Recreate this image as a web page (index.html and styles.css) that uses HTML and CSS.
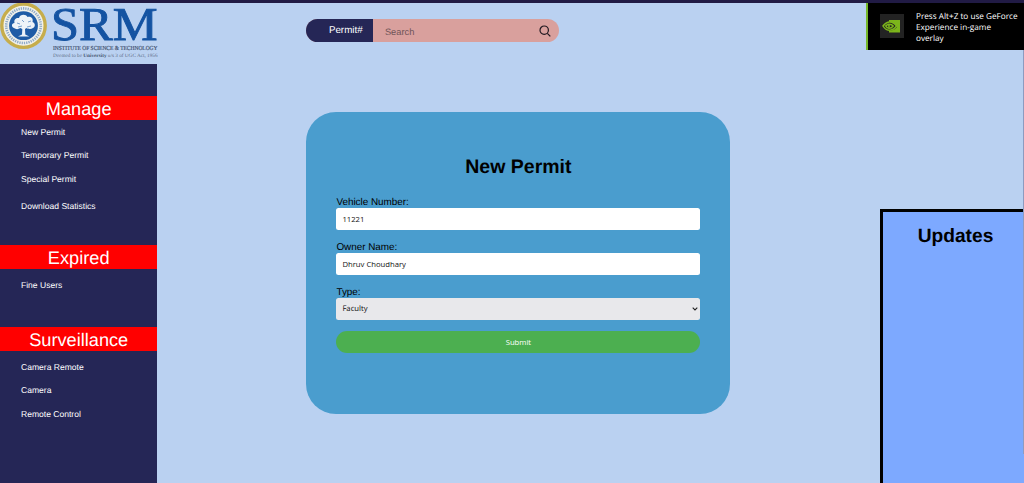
FILE: index.html
```
<!DOCTYPE html>
<html lang="en">
<head>
<meta charset="utf-8">
<title>New Permit</title>
<link rel="stylesheet" href="styles.css">
</head>
<body>
<div class="page">
  <aside class="left">
    <svg class="logo" viewBox="0 0 158 61" role="img" aria-label="SRM Institute of Science and Technology">
      <circle cx="23.5" cy="22.700" r="21.7" fill="#f1f1ea" stroke="#c6ad4c" stroke-width="3.4"/>
      <circle cx="23.5" cy="22.700" r="17.3" fill="none" stroke="#8faac8" stroke-width="2.6" stroke-dasharray="1.3 1"/>
      <circle cx="23.5" cy="22.700" r="14.4" fill="#1f5ca6"/>
      <path d="M14 25c-3-1-2.500-5 .5-5-1-4 2-5.500 4.500-5 1-4 7-4 8.500-1 4-1 6 2 5 5 3 1 3 5 .5 6-2 1.500-5 1-6.500 0l-1.500 1 .3 5.500 4 2H18l4-2 .3-5.500-2-1c-2 1.500-4.500 1.500-6.300 0z" fill="#eef3f8"/>
      <path d="M17 20l3 1m2-4l2 2m4 0l3-1m-13 6l4-1m5 1l4-1" stroke="#5b8ac0" stroke-width=".8" fill="none"/>
      <text class="logo-name" x="51" y="36.500" textLength="106.500" lengthAdjust="spacingAndGlyphs">SRM</text>
      <text class="logo-line" x="53" y="47.300" textLength="104.500" lengthAdjust="spacingAndGlyphs">INSTITUTE OF SCIENCE &amp; TECHNOLOGY</text>
      <text class="logo-sub" x="53" y="53.800" textLength="104.500" lengthAdjust="spacingAndGlyphs">Deemed to be <tspan class="strong">University</tspan> u/s 3 of UGC Act, 1956</text>
    </svg>
    <nav class="sidebar">
      <h2>Manage</h2>
      <ul class="manage">
        <li>New Permit</li><li>Temporary Permit</li><li>Special Permit</li><li class="stats">Download Statistics</li>
      </ul>
      <h2>Expired</h2>
      <ul class="expired"><li>Fine Users</li></ul>
      <h2>Surveillance</h2>
      <ul class="cameras"><li>Camera Remote</li><li>Camera</li><li>Remote Control</li></ul>
    </nav>
  </aside>
  <main class="center">
    <div class="search">
      <span class="search-type">Permit#</span>
      <span class="search-field">Search</span>
      <svg class="search-icon" viewBox="0 0 12 12"><circle cx="5.200" cy="5.200" r="4.200"/><path d="M8.300 8.300l3 3"/></svg>
    </div>
    <form class="card">
      <h1>New Permit</h1>
      <label for="vehicle">Vehicle Number:</label>
      <input id="vehicle" class="field" type="text" value="11221">
      <label for="owner">Owner Name:</label>
      <input id="owner" class="field" type="text" value="Dhruv Choudhary" spellcheck="false">
      <label for="type">Type:</label>
      <div id="type" class="field select"><span>Faculty</span><svg viewBox="0 0 6 4"><path d="M.7.7L3 3 5.300.7"/></svg></div>
      <button type="button">Submit</button>
    </form>
  </main>
  <aside class="right">
    <div class="toast">
      <svg class="toast-icon" viewBox="0 0 24 24">
        <path fill="#232323" d="M0 0h24v24H0z"/>
        <path fill="#7cb51b" d="M9 6h11v12.500H9z"/>
        <path fill="#232323" d="M9 8C6 8.500 3.500 10.500 2.500 12c1.500 3 4 4.500 6.500 4.700 4 .3 6.500-2 8-3.700-1.500-2.500-4.500-5.500-8-5z"/>
        <path fill="none" stroke="#7cb51b" stroke-width="1.500" d="M9 8C6 8.500 4 10.500 3 12c1.500 2.700 3.500 4 6 4.300M9 8c3-.4 5.800 1.700 7.500 4-1.500 2-4 4.200-7.500 4.300M9 10.200c-1.700.2-2.700 1-3.300 1.800.7 1.400 2 2.200 3.300 2.300 2 0 3.500-1.300 4.200-2.300-.9-1.200-2.400-2-4.200-1.800v3"/>
      </svg>
      <p>Press Alt+Z to use GeForce<br>Experience in-game<br>overlay</p>
    </div>
    <section class="updates"><h2>Updates</h2></section>
  </aside>
  <i class="topbar"></i>
  <i class="edge"></i>
</div>
</body>
</html>
```
FILE: styles.css
```
* { box-sizing: border-box; }
body { margin: 0; font-family: "Liberation Sans", Arial, sans-serif; text-rendering: geometricPrecision; }
h1, h2, p, ul { margin: 0; padding: 0; }
.page {
  position: relative;
  display: grid;
  grid-template-columns: 157.4px 1fr 158px;
  height: 483px;
  overflow: hidden;
  background: #bad1f1;
}
.topbar { position: absolute; top: 0; left: 0; right: 0; height: 2.500px; background: #211b45; }
.edge { position: absolute; right: 0; top: 50px; width: 1px; height: 404px; background: #8d9bc0; }
.left { display: flex; flex-direction: column; padding-top: 3px; }
.logo { display: block; width: 158px; height: 61px; flex: none; overflow: visible; }
.logo-name { font: 47px "Liberation Serif", serif; fill: #1453a2; stroke: #1453a2; stroke-width: .9px; }
.logo-line { font: 6.200px "Liberation Serif", serif; fill: #3c4b68; stroke: #3c4b68; stroke-width: .15px; }
.logo-sub { font: 5.100px "Liberation Serif", serif; fill: #5b6b84; }
.strong { font-weight: bold; fill: #44546f; }
.sidebar { flex: 1; padding-top: 32px; background: #252656; color: #fff; }
.sidebar h2 {
  height: 24px;
  background: #f00;
  font-size: 18.200px;
  font-weight: 400;
  line-height: 26px;
  text-align: center;
}
.sidebar ul { list-style: none; padding-left: 21px; font-size: 8.550px; line-height: 23.300px; }
.manage { height: 125px; padding-top: 1px; }
.manage .stats { padding-top: 4px; }
.expired { height: 58px; padding-top: 5px; }
.cameras { padding-top: 5px; }
.center { padding: 19px 0 0 149px; }
.search {
  display: flex;
  align-items: center;
  width: 253px;
  height: 23px;
  border-radius: 12px;
  overflow: hidden;
  background: #d9a09d;
}
.search-type { width: 66.500px; height: 23px; padding-left: 22.500px; background: #252656; color: #fff; font-size: 9.800px; line-height: 23px; }
.search-field { flex: 1; padding: 3px 0 0 12px; color: #705458; font-size: 9.300px; }
.search-icon { width: 12px; height: 12px; margin-right: 8px; margin-top: 1px; fill: none; stroke: #201820; stroke-width: 1.200; }
.card {
  display: flex;
  flex-direction: column;
  width: 424px;
  height: 302px;
  margin-top: 70px;
  padding: 43px 30px 0;
  border-radius: 30px;
  background: #4a9dce;
}
.card h1 { height: 41px; font-size: 19.500px; line-height: 24px; text-align: center; }
.card label { height: 12px; font-size: 9.900px; line-height: 13.500px; }
.field {
  width: 364px;
  height: 21.500px;
  margin-bottom: 11.500px;
  padding: 0 6px;
  border: 0;
  border-radius: 2.500px;
  background: #fff;
  color: #111;
  font: 7.700px "Open Sans", sans-serif;
}
.select { display: flex; align-items: center; justify-content: space-between; padding-right: 2px; background: #e8e8eb; }
.select svg { width: 6px; height: 4px; fill: none; stroke: #222; stroke-width: 1.100; }
.card button { width: 364px; height: 22px; padding: 0; border: 0; border-radius: 11px; background: #4caf50; color: #fff; font: 7.700px "Open Sans", sans-serif; }
.right { display: flex; flex-direction: column; justify-content: space-between; align-items: flex-end; }
.toast { display: flex; width: 158px; height: 50px; padding: 2px 0 0 12px; border-left: 2.500px solid #76b82a; background: #000; color: #fff; }
.toast-icon { width: 24px; height: 24px; margin: 12px 12px 0 0; }
.toast p { padding-top: 8.500px; font: 8.200px/11.300px "Open Sans", sans-serif; white-space: nowrap; }
.updates { width: 144px; height: 274px; border: solid #000; border-width: 3px 0 0 3px; background: #7da9ff; }
.updates h2 { padding: 14px 0 0 4px; font-size: 19.200px; line-height: 22px; text-align: center; }
```
